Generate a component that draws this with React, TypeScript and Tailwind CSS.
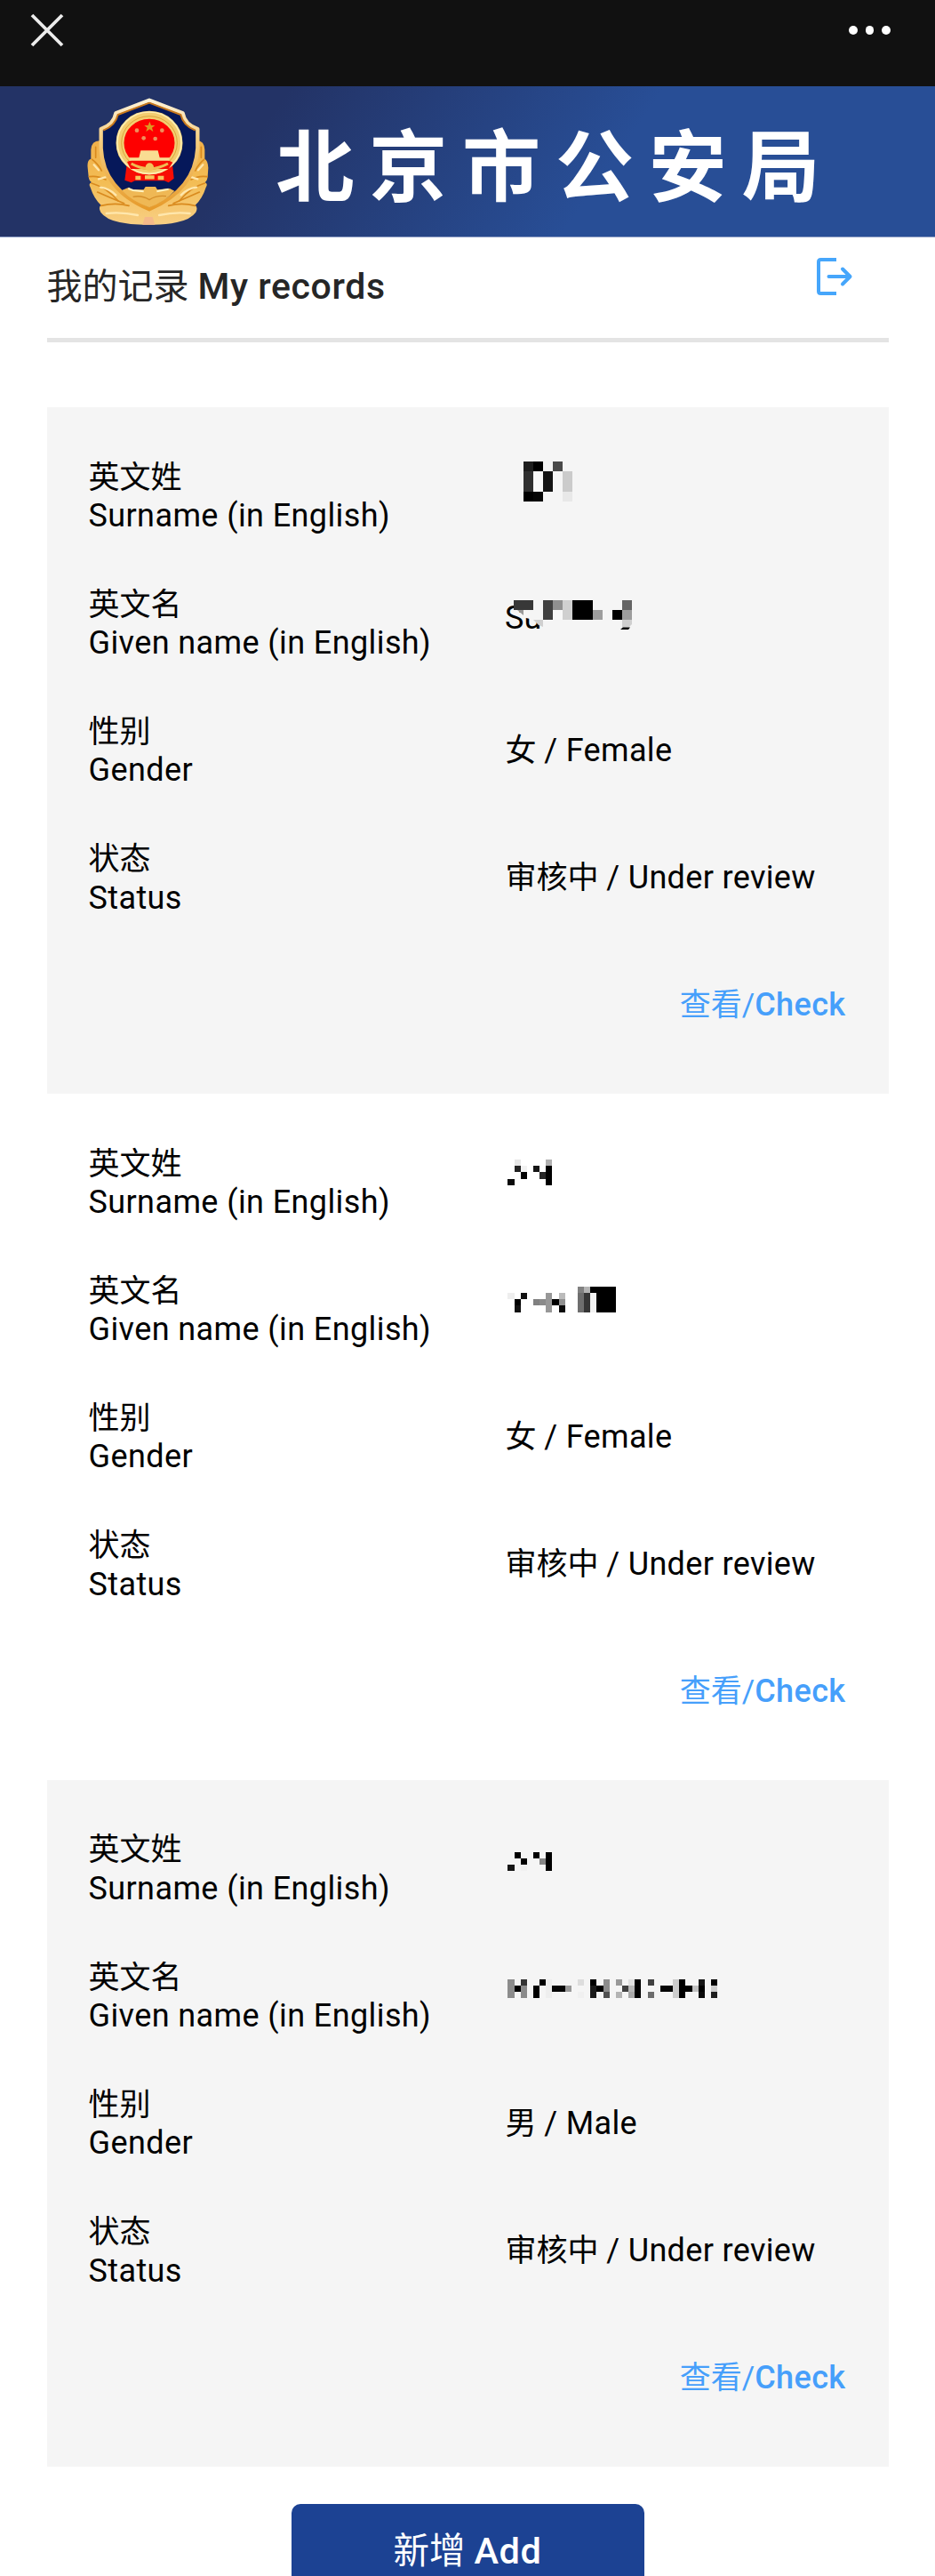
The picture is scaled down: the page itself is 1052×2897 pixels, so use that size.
import { ReactNode } from "react";

// x, y, width, height, color
type Cell = [number, number, number, number, string];

interface PersonRecord {
  surname: ReactNode;
  givenName: ReactNode;
  gender: ReactNode;
  status: ReactNode;
}

interface MaskedProps {
  cells: Cell[];
  children?: ReactNode;
}

// redacted value, drawn as a block mosaic
const Masked = ({ cells, children }: MaskedProps) => (
  <svg width="260" height="143" viewBox="0 0 260 143" className="block">
    {children}
    <g shapeRendering="crispEdges">
      {cells.map(([x, y, w, h, fill]) => (
        <rect key={`${x}-${y}`} x={x} y={y} width={w} height={h} fill={fill} />
      ))}
    </g>
  </svg>
);

const surname1: Cell[] = [
  [21, 33, 11, 11, "#1e1e1e"], [32, 33, 11, 11, "#000"], [54, 33, 11, 11, "#4a4a4a"],
  [21, 44, 11, 23, "#303030"], [32, 44, 11, 23, "#f9f9f9"], [43, 44, 11, 23, "#141414"],
  [65, 44, 11, 23, "#cbcbcb"], [21, 67, 11, 11, "#000"], [32, 67, 11, 11, "#060606"],
  [65, 67, 11, 11, "#e8e8e8"],
];

const given1: Cell[] = [
  [10, 46, 22, 11, "#383838"], [43, 46, 11, 22, "#404040"], [54, 46, 11, 11, "#909090"],
  [54, 57, 11, 11, "#f8f8f8"], [65, 46, 11, 22, "#d0d0d0"], [76, 46, 23, 22, "#000"],
  [99, 57, 11, 11, "#9d9d9d"], [121, 57, 11, 11, "#000"], [132, 46, 11, 11, "#646464"],
  [132, 57, 11, 11, "#9d9d9d"],
];

const surname2: Cell[] = [
  [11, 46, 7, 7, "#e6e6e6"], [46, 46, 7, 7, "#b0b0b0"], [11, 53, 7, 7, "#222"],
  [18, 53, 7, 7, "#f2f2f2"], [32, 53, 7, 7, "#151515"], [46, 53, 7, 22, "#000"],
  [18, 60, 7, 8, "#000"], [39, 60, 7, 8, "#262626"], [3, 68, 8, 7, "#0a0a0a"],
];

const given2: Cell[] = [
  [3, 53, 8, 7, "#eee"], [18, 53, 7, 7, "#111"], [11, 60, 7, 7, "#000"],
  [11, 67, 7, 8, "#111"], [32, 60, 7, 7, "#808080"], [39, 60, 7, 7, "#8a8a8a"],
  [46, 53, 7, 22, "#989898"], [53, 60, 8, 7, "#000"], [61, 53, 7, 7, "#bbb"],
  [61, 60, 7, 7, "#909090"], [61, 67, 7, 8, "#0a0a0a"], [82, 46, 7, 7, "#808080"],
  [89, 46, 7, 7, "#b4b4b4"], [96, 46, 7, 7, "#000"], [82, 53, 7, 22, "#6e6e6e"],
  [89, 53, 7, 22, "#363636"], [96, 53, 7, 22, "#f2f2f2"], [103, 46, 22, 29, "#000"],
];

const surname3: Cell[] = [
  [11, 53, 7, 7, "#000"], [32, 53, 7, 7, "#000"], [46, 53, 7, 21, "#000"],
  [18, 60, 7, 7, "#000"], [39, 60, 7, 7, "#868686"], [3, 67, 8, 7, "#161616"],
  [18, 67, 7, 7, "#f0f0f0"],
];

const given3: Cell[] = [
  [3, 53, 8, 21, "#8c8c8c"], [11, 60, 7, 7, "#000"], [18, 53, 7, 7, "#333"],
  [18, 60, 7, 14, "#8a8a8a"], [32, 60, 7, 14, "#000"], [39, 53, 7, 7, "#000"],
  [46, 53, 7, 21, "#eee"], [53, 60, 15, 7, "#050505"], [68, 60, 7, 7, "#999"],
  [82, 53, 7, 7, "#ddd"], [82, 67, 7, 7, "#f0f0f0"], [96, 53, 7, 7, "#000"],
  [96, 60, 7, 14, "#1a1a1a"], [103, 60, 8, 7, "#000"], [111, 53, 7, 14, "#8c8c8c"],
  [111, 67, 7, 7, "#505050"], [125, 53, 7, 7, "#999"], [125, 67, 7, 7, "#b4b4b4"],
  [132, 60, 7, 7, "#404040"], [139, 53, 7, 7, "#e0e0e0"], [139, 60, 7, 7, "#b8b8b8"],
  [139, 67, 7, 7, "#a8a8a8"], [146, 53, 7, 21, "#000"], [161, 53, 7, 7, "#404040"],
  [161, 67, 7, 7, "#6c6c6c"], [175, 60, 14, 7, "#050505"], [189, 53, 7, 21, "#ccc"],
  [196, 53, 7, 21, "#000"], [203, 60, 8, 7, "#000"], [211, 60, 7, 7, "#c0c0c0"],
  [218, 53, 7, 7, "#161616"], [218, 60, 7, 7, "#000"], [218, 67, 7, 7, "#0a0a0a"],
  [232, 53, 7, 7, "#000"], [232, 60, 7, 7, "#ccc"], [232, 67, 7, 7, "#1e1e1e"],
];

// Chinese text first, then the Latin part slightly larger
const Bilingual = ({ cn, en }: { cn: string; en: string }) => (
  <p className="pt-[2px] pl-px">
    {cn} <span className="text-[36px] tracking-[0.35px]">{en}</span>
  </p>
);

const records: PersonRecord[] = [
  {
    surname: <Masked cells={surname1} />,
    givenName: (
      <Masked cells={given1}>
        <text x="0" y="78" fontSize="36">
          Su
        </text>
        {/* covers the top of the second letter */}
        <path d="M23 46H47V75L40 73L32 68L24 66H23Z" fill="#f5f5f5" />
        <path d="M14 57H21V63Z" fill="#999" />
        <path d="M32 68H43V76L38 74Z" fill="#d0d0d0" />
        <path d="M132 68H143V73L140 76L132 77Z" fill="#cfcfcf" />
        <path d="M133 76.5H141L139 79H130Z" fill="#000" />
      </Masked>
    ),
    gender: <Bilingual cn="女" en="/ Female" />,
    status: <Bilingual cn="审核中" en="/ Under review" />,
  },
  {
    surname: <Masked cells={surname2} />,
    givenName: <Masked cells={given2} />,
    gender: <Bilingual cn="女" en="/ Female" />,
    status: <Bilingual cn="审核中" en="/ Under review" />,
  },
  {
    surname: <Masked cells={surname3} />,
    givenName: <Masked cells={given3} />,
    gender: <Bilingual cn="男" en="/ Male" />,
    status: <Bilingual cn="审核中" en="/ Under review" />,
  },
];

const Emblem = () => (
  <svg width="137" height="144" viewBox="55 60 411 432" className="shrink-0">
    <defs>
      <linearGradient id="gold" x1="0" y1="0" x2="0" y2="1">
        <stop offset="0" stopColor="#f0b04a" />
        <stop offset="0.5" stopColor="#f3bd55" />
        <stop offset="1" stopColor="#f8cf84" />
      </linearGradient>
      <linearGradient id="rim" x1="0" y1="0" x2="0" y2="1">
        <stop offset="0" stopColor="#fff3d8" />
        <stop offset="0.35" stopColor="#f6cf83" />
        <stop offset="1" stopColor="#e69a2a" />
      </linearGradient>
    </defs>
    {/* wheat ears */}
    <g fill="url(#gold)">
      <path d="M97 205Q70 205 68 235V266Q54 270 57 296L60 326Q62 340 70 345Q58 350 66 362Q78 400 102 422Q92 430 101 446Q118 470 165 480Q210 490 262 488Q315 490 358 480Q405 470 422 446Q430 430 420 422Q444 400 456 362Q464 350 453 345Q460 340 462 326L464 296Q462 270 452 266V235Q450 205 428 205Z" />
    </g>
    <g fill="none" stroke="#d98a1e" strokeWidth="5" strokeLinecap="round">
      <path d="M72 268Q92 282 104 306M62 326Q92 322 118 336M70 348Q120 362 160 408M102 424Q150 412 196 424" />
      <path d="M450 268Q432 282 420 306M460 326Q430 322 406 336M452 348Q404 362 366 408M420 424Q374 412 330 424" />
      <path d="M84 226V262M440 226V262M90 378Q130 396 180 416M434 378Q394 396 346 416" />
    </g>
    <g fill="none" stroke="#ffe7ad" strokeWidth="7" strokeLinecap="round">
      <path d="M94 334L116 328M428 334L408 328M120 450Q170 444 226 456M402 450Q352 444 298 456" />
      <path d="M78 286L94 304M446 286L430 304M100 362Q130 366 152 388M424 362Q394 366 372 388" />
    </g>
    <path d="M242 488L250 462H276L284 488Z" fill="#f5b98a" />
    {/* shield */}
    <path
      d="M265 68L378 112Q384 150 428 165V230Q420 370 265 436Q108 370 102 230V165Q146 150 152 112Z"
      fill="#06185a"
      stroke="url(#rim)"
      strokeWidth="13"
      strokeLinejoin="round"
    />
    <path d="M265 77L371 117Q380 154 420 170" fill="none" stroke="#c8781c" strokeWidth="6" />
    <path d="M265 77L159 117Q150 154 110 170" fill="none" stroke="#c8781c" strokeWidth="6" />
    <path d="M172 372L196 362L206 370H246L252 360H286L292 370L334 366L350 374Q320 408 265 430Q205 408 172 372Z" fill="#efb855" />
    <path d="M194 366L210 372L246 376M290 376L330 368" fill="none" stroke="#fff2c2" strokeWidth="6" />
    <path d="M210 394Q240 388 265 404Q290 388 322 392" fill="none" stroke="#d58f2b" strokeWidth="4" />
    {/* national emblem */}
    <path d="M190 276L182 338L204 346L216 340H316L330 346L348 332L342 276Z" fill="#f80d04" />
    <circle cx="265" cy="214" r="100" fill="#fe0000" />
    <ellipse cx="265" cy="212" rx="99" ry="94" fill="none" stroke="#f3cd70" strokeWidth="27" />
    <ellipse cx="265" cy="212" rx="108" ry="104" fill="none" stroke="#ffedb0" strokeWidth="5" />
    <ellipse cx="265" cy="212" rx="94" ry="90" fill="none" stroke="#dca53c" strokeWidth="3" />
    <path d="M190 276L216 266H320L344 278L330 300H202Z" fill="#f80d04" />
    <path d="M236 238H294L300 262H332V272H198V262H230Z" fill="#f9dc92" />
    <path d="M204 282Q265 316 328 282" fill="none" stroke="#efbd52" strokeWidth="9" />
    <circle cx="266" cy="294" r="14" fill="#f2c35a" />
    <path d="M218 330H236M250 328H282M294 330H314" stroke="#f7c65e" strokeWidth="13" />
    <path d="M266 140L271 153H284L274 161L278 174L266 166L254 174L258 161L248 153H261Z" fill="#dc9a22" />
    <g fill="#ef8f5c">
      <circle cx="223" cy="170" r="7" />
      <circle cx="308" cy="170" r="7" />
      <circle cx="246" cy="196" r="7" />
      <circle cx="285" cy="198" r="7" />
    </g>
  </svg>
);

const TopBar = () => (
  <header className="flex h-[97px] items-start justify-between bg-[#111] pt-[15px] pr-[50.5px] pl-[34px]">
    <svg width="38" height="38" viewBox="0 0 38 38" stroke="#ececec" strokeWidth="3.8">
      <path d="M2 2L36 36M36 2L2 36" />
    </svg>
    <div className="mt-[14px] flex gap-[9px]">
      <span className="size-[9.5px] rounded-full bg-white" />
      <span className="size-[9.5px] rounded-full bg-white" />
      <span className="size-[9.5px] rounded-full bg-white" />
    </div>
  </header>
);

const Banner = () => (
  <div className="flex h-[170px] items-center border-b border-[#8b9bc3] bg-[linear-gradient(125deg,#233366_28%,#284e96_64%)] pl-[97.5px]">
    <Emblem />
    <h1 className="ml-[76px] pb-[2px] font-['Noto_Sans_CJK_SC',sans-serif] text-[88px] leading-[168px] font-bold tracking-[16.8px] whitespace-nowrap text-white">
      北京市公安局
    </h1>
  </div>
);

const LogoutIcon = () => (
  <svg width="42" height="44" viewBox="0 0 42 44" fill="none" stroke="#46a6fb" strokeWidth="4">
    <path d="M23 3H5.5Q3 3 3 5.5V38.5Q3 41 5.5 41H23" />
    <path d="M14.5 22H38M30 13.5L38.5 22L30 30.5" strokeLinecap="round" strokeLinejoin="round" />
  </svg>
);

const Row = ({ cn, en, value }: { cn: string; en: string; value: ReactNode }) => (
  <div className="flex h-[143.2px] items-center leading-[43.5px]">
    <div className="w-[468px] shrink-0 pt-[3px]">
      <p>{cn}</p>
      <p className="text-[36px] tracking-[0.4px]">{en}</p>
    </div>
    <div className="whitespace-nowrap">{value}</div>
  </div>
);

const RecordCard = ({ record }: { record: PersonRecord }) => (
  <section className="py-7 pr-12 pl-[47px] text-[35px] text-black odd:bg-[#f5f5f5]">
    <Row cn="英文姓" en="Surname (in English)" value={record.surname} />
    <Row cn="英文名" en="Given name (in English)" value={record.givenName} />
    <Row cn="性别" en="Gender" value={record.gender} />
    <Row cn="状态" en="Status" value={record.status} />
    <div className="flex h-[143.2px] items-center justify-end text-[#469ffb]">
      <a>
        查看/<span className="text-[36px] font-medium tracking-[0.4px]">Check</span>
      </a>
    </div>
  </section>
);

export default function App() {
  return (
    <div className="h-[2897px] w-[1052px] overflow-hidden bg-white font-[Roboto,'Noto_Sans_CJK_SC',sans-serif]">
      <TopBar />
      <Banner />
      <main className="mx-[52.5px]">
        <div className="flex h-[118px] items-center justify-between border-b-[5px] border-[#e4e4e4] text-[40px] text-[#262626]">
          <h2 className="pb-px">
            我的记录 <span className="text-[41px] font-medium tracking-[0.6px]">My records</span>
          </h2>
          <div className="mt-[22px] mr-[39.5px] self-start">
            <LogoutIcon />
          </div>
        </div>
        <div className="mt-[73px]">
          {records.map((record, i) => (
            <RecordCard key={i} record={record} />
          ))}
        </div>
        <button className="mx-auto mt-[42px] block h-[106px] w-[397px] rounded-[10px] bg-[#1c4293] text-[40.5px] text-white">
          新增 <span className="text-[41.5px] font-medium tracking-[0.6px]">Add</span>
        </button>
      </main>
    </div>
  );
}
